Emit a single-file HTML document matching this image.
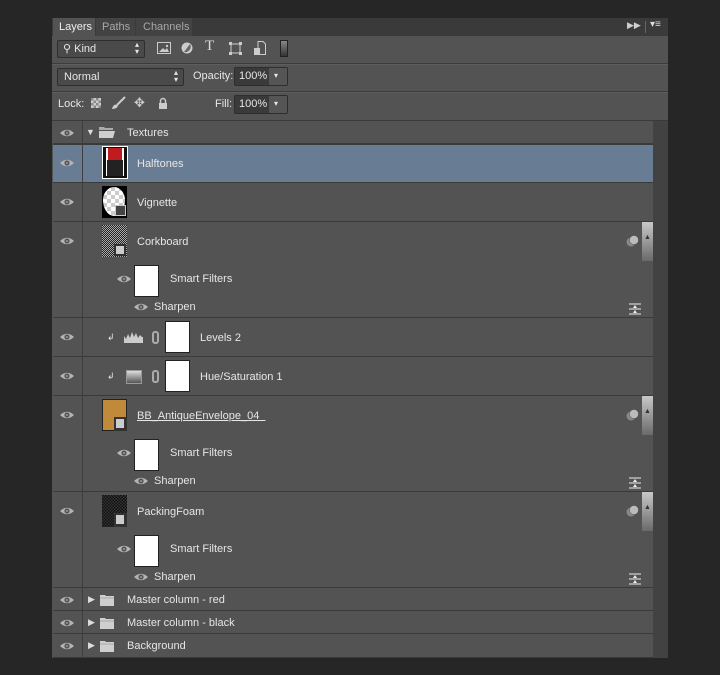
<!DOCTYPE html>
<html><head><meta charset="utf-8"><style>
*{margin:0;padding:0;box-sizing:border-box}
body{width:720px;height:675px;background:#262626;position:relative;overflow:hidden;font-family:"Liberation Sans",sans-serif;font-size:11px;color:#e6e6e6}
.a{position:absolute}
.panel{left:52px;top:18px;width:616px;height:640px;background:#535353}
.row{position:absolute;left:53px;width:600px;border-bottom:1px solid #3a3a3a;background:#535353}
.eyecol{position:absolute;left:82px;width:1px;background:#3e3e3e}
.txt{position:absolute;white-space:nowrap}
.wt{position:absolute;background:#fff;border:1px solid #222}
.box{position:absolute;background:#3d3d3d;border:1px solid #2e2e2e;border-radius:2px}
</style></head><body>
<div class="a panel"></div>
<div class="a" style="left:52px;top:18px;width:616px;height:18px;background:#3a3a3a"></div>
<div class="a" style="left:53px;top:18px;width:42px;height:19px;background:#535353"></div>
<div class="a" style="left:96px;top:18px;width:39px;height:18px;background:#434343"></div>
<div class="a" style="left:136px;top:18px;width:56px;height:18px;background:#434343"></div>
<div class="txt" style="left:59px;top:21px;color:#eee">Layers</div>
<div class="txt" style="left:102px;top:21px;color:#a8a8a8">Paths</div>
<div class="txt" style="left:143px;top:21px;color:#a8a8a8">Channels</div>
<div class="txt" style="left:627px;top:20px;color:#cfcfcf;font-size:9px">▶▶</div>
<div class="a" style="left:645px;top:21px;width:1px;height:12px;background:#666"></div>
<div class="txt" style="left:650px;top:19px;color:#ddd;font-size:10px">▾≡</div>
<div class="a" style="left:52px;top:63px;width:616px;height:1px;background:#3c3c3c"></div>
<div class="a" style="left:52px;top:64px;width:616px;height:1px;background:#5e5e5e"></div>
<div class="a" style="left:52px;top:91px;width:616px;height:1px;background:#3c3c3c"></div>
<div class="a" style="left:52px;top:92px;width:616px;height:1px;background:#5e5e5e"></div>
<div class="a" style="left:52px;top:120px;width:616px;height:1px;background:#3a3a3a"></div>
<div class="box" style="left:57px;top:40px;width:88px;height:18px;background:#4a4a4a"></div>
<div class="txt" style="left:63px;top:42px">⚲ Kind</div>
<div class="txt" style="left:135px;top:41px;font-size:8px;line-height:7px">▴<br>▾</div>
<svg class="a" style="left:157px;top:42px" width="14" height="12"><rect x="0.5" y="0.5" width="13" height="11" fill="none" stroke="#ccc"/><path d="M2 10l4-4 2 2 2-2 2 4z" fill="#ccc"/><circle cx="10" cy="4" r="1.2" fill="#ccc"/></svg>
<svg class="a" style="left:181px;top:42px" width="12" height="12"><circle cx="6" cy="6" r="5.5" fill="#ccc"/><path d="M9 2L3 10A5.5 5.5 0 0 0 9 2z" fill="#666"/></svg>
<div class="txt" style="left:205px;top:38px;font-family:'Liberation Serif',serif;font-size:15px;color:#ddd">T</div>
<svg class="a" style="left:229px;top:42px" width="13" height="13"><rect x="2" y="2" width="9" height="9" fill="none" stroke="#ccc"/><rect x="0" y="0" width="3" height="3" fill="#ccc"/><rect x="10" y="0" width="3" height="3" fill="#ccc"/><rect x="0" y="10" width="3" height="3" fill="#ccc"/><rect x="10" y="10" width="3" height="3" fill="#ccc"/></svg>
<svg class="a" style="left:254px;top:41px" width="12" height="14"><path d="M4 .5h5l2.5 2.5v10.5h-7.5z" fill="none" stroke="#ccc"/><rect x="0" y="7" width="6" height="7" fill="#ccc"/></svg>
<div class="a" style="left:280px;top:40px;width:8px;height:17px;background:linear-gradient(#888,#333);border:1px solid #222"></div>
<div class="box" style="left:57px;top:68px;width:127px;height:18px;background:#4a4a4a"></div>
<div class="txt" style="left:64px;top:71px">Normal</div>
<div class="txt" style="left:174px;top:69px;font-size:8px;line-height:7px">▴<br>▾</div>
<div class="txt" style="left:193px;top:70px">Opacity:</div>
<div class="box" style="left:234px;top:67px;width:54px;height:19px;background:#3a3a3a"></div>
<div class="a" style="left:269px;top:68px;width:18px;height:17px;background:#555"></div>
<div class="txt" style="left:239px;top:70px">100%</div>
<div class="txt" style="left:274px;top:71px;font-size:8px">▾</div>
<div class="txt" style="left:58px;top:98px">Lock:</div>
<div class="a" style="left:91px;top:98px;width:10px;height:10px;background:repeating-conic-gradient(#ccc 0 25%,#888 0 50%) 0 0/5px 5px"></div>
<svg class="a" style="left:111px;top:96px" width="15" height="14"><path d="M14 1L6 9" stroke="#ccc" stroke-width="2"/><path d="M1 13c1-4 3-5 5-4s0 4-5 4z" fill="#ccc"/></svg>
<div class="txt" style="left:134px;top:95px;font-size:13px;color:#ccc">✥</div>
<svg class="a" style="left:158px;top:97px" width="10" height="13"><path d="M2.5 6V4a2.5 2.5 0 0 1 5 0v2" fill="none" stroke="#ccc" stroke-width="1.5"/><rect x="1" y="6" width="8" height="6" fill="#ccc"/></svg>
<div class="txt" style="left:215px;top:98px">Fill:</div>
<div class="box" style="left:234px;top:95px;width:54px;height:19px;background:#3a3a3a"></div>
<div class="a" style="left:269px;top:96px;width:18px;height:17px;background:#555"></div>
<div class="txt" style="left:239px;top:98px">100%</div>
<div class="txt" style="left:274px;top:99px;font-size:8px">▾</div>
<div class="a" style="left:653px;top:121px;width:15px;height:537px;background:#424242"></div>
<div class="row" style="top:121px;height:23px"></div>
<div class="row" style="top:144px;height:39px;background:#687d94;border-top:1px solid #3a3a3a"></div>
<div class="row" style="top:183px;height:39px"></div>
<div class="row" style="top:222px;height:96px"></div>
<div class="row" style="top:318px;height:39px"></div>
<div class="row" style="top:357px;height:39px"></div>
<div class="row" style="top:396px;height:96px"></div>
<div class="row" style="top:492px;height:96px"></div>
<div class="row" style="top:588px;height:23px"></div>
<div class="row" style="top:611px;height:23px"></div>
<div class="row" style="top:634px;height:24px"></div>
<div class="eyecol" style="top:121px;height:537px"></div>
<svg width="0" height="0" style="position:absolute"><defs><g id="eye"><path d="M0 5Q7-1.5 14 5Q7 11.5 0 5z" fill="#b5b5b5"/><circle cx="7" cy="5" r="2.6" fill="#555"/><circle cx="7" cy="5" r="1" fill="#999"/></g></defs></svg>
<svg class="a" style="left:60px;top:128px" width="14" height="10"><use href="#eye"/></svg>
<svg class="a" style="left:60px;top:158px" width="14" height="10"><use href="#eye"/></svg>
<svg class="a" style="left:60px;top:197px" width="14" height="10"><use href="#eye"/></svg>
<svg class="a" style="left:60px;top:236px" width="14" height="10"><use href="#eye"/></svg>
<svg class="a" style="left:117px;top:274px" width="14" height="10"><use href="#eye"/></svg>
<svg class="a" style="left:134px;top:302px" width="14" height="10"><use href="#eye"/></svg>
<svg class="a" style="left:60px;top:332px" width="14" height="10"><use href="#eye"/></svg>
<svg class="a" style="left:60px;top:371px" width="14" height="10"><use href="#eye"/></svg>
<svg class="a" style="left:60px;top:410px" width="14" height="10"><use href="#eye"/></svg>
<svg class="a" style="left:117px;top:448px" width="14" height="10"><use href="#eye"/></svg>
<svg class="a" style="left:134px;top:476px" width="14" height="10"><use href="#eye"/></svg>
<svg class="a" style="left:60px;top:506px" width="14" height="10"><use href="#eye"/></svg>
<svg class="a" style="left:117px;top:544px" width="14" height="10"><use href="#eye"/></svg>
<svg class="a" style="left:134px;top:572px" width="14" height="10"><use href="#eye"/></svg>
<svg class="a" style="left:60px;top:595px" width="14" height="10"><use href="#eye"/></svg>
<svg class="a" style="left:60px;top:618px" width="14" height="10"><use href="#eye"/></svg>
<svg class="a" style="left:60px;top:641px" width="14" height="10"><use href="#eye"/></svg>
<svg width="0" height="0" style="position:absolute"><defs><g id="fold"><path d="M0 2h5l1 1h8v10H0z" fill="#cfcfcf"/><path d="M0 5h14" stroke="#aaa"/></g></defs></svg>
<div class="txt" style="left:86px;top:127px;font-size:9px;color:#ddd">▼</div>
<svg class="a" style="left:99px;top:125px" width="16" height="14"><path d="M0 2h5l1 1h8v2H0z" fill="#aaa"/><path d="M0 6h16l-2 7H0z" fill="#cfcfcf"/></svg>
<div class="txt" style="left:127px;top:127px">Textures</div>
<div class="txt" style="left:88px;top:594px;font-size:9px;color:#ddd">▶</div>
<svg class="a" style="left:100px;top:593px" width="14" height="13"><use href="#fold"/></svg>
<div class="txt" style="left:127px;top:594px">Master column - red</div>
<div class="txt" style="left:88px;top:617px;font-size:9px;color:#ddd">▶</div>
<svg class="a" style="left:100px;top:616px" width="14" height="13"><use href="#fold"/></svg>
<div class="txt" style="left:127px;top:617px">Master column - black</div>
<div class="txt" style="left:88px;top:640px;font-size:9px;color:#ddd">▶</div>
<svg class="a" style="left:100px;top:639px" width="14" height="13"><use href="#fold"/></svg>
<div class="txt" style="left:127px;top:640px">Background</div>
<div class="a" style="left:102px;top:146px;width:26px;height:33px;border:1px solid #fff;background:#111"></div>
<div class="a" style="left:106px;top:148px;width:18px;height:28px;background:#fff"></div>
<div class="a" style="left:108px;top:148px;width:14px;height:12px;background:#c01c20"></div>
<div class="a" style="left:107px;top:160px;width:16px;height:16px;background:#222"></div>
<div class="txt" style="left:137px;top:158px">Halftones</div>
<div class="a" style="left:102px;top:186px;width:25px;height:32px;background:#000"></div>
<div class="a" style="left:103px;top:187px;width:22px;height:29px;border-radius:50% 50% 50% 50%/45% 45% 55% 55%;background:repeating-conic-gradient(#fff 0 25%,#ccc 0 50%) 0 0/8px 8px"></div>
<div class="a" style="left:115px;top:205px;width:11px;height:11px;background:#444;border:1px solid #ccc"></div>
<div class="txt" style="left:137px;top:197px">Vignette</div>
<div class="a" style="left:102px;top:225px;width:25px;height:32px;background:repeating-conic-gradient(#aaa 0 25%,#222 0 50%) 0 0/2px 2px"></div>
<div class="a" style="left:114px;top:244px;width:12px;height:12px;background:#333"></div>
<div class="a" style="left:116px;top:246px;width:8px;height:8px;background:#ccc"></div>
<div class="txt" style="left:137px;top:236px">Corkboard</div>
<div class="wt" style="left:134px;top:265px;width:25px;height:32px"></div>
<div class="txt" style="left:170px;top:273px">Smart Filters</div>
<div class="txt" style="left:154px;top:301px">Sharpen</div>
<div class="txt" style="left:107px;top:332px;font-size:9px">↲</div>
<svg class="a" style="left:124px;top:331px" width="19" height="12"><path d="M0 12V5l2 3 2-5 2 4 2-6 2 5 2-4 2 5 2-3 2 2 1 0v11z" fill="#ccc"/></svg>
<div class="a" style="left:152px;top:331px;width:7px;height:13px;border:2px solid #aaa;border-radius:3px"></div>
<div class="wt" style="left:165px;top:321px;width:25px;height:32px"></div>
<div class="txt" style="left:200px;top:332px">Levels 2</div>
<div class="txt" style="left:107px;top:371px;font-size:9px">↲</div>
<div class="a" style="left:126px;top:370px;width:16px;height:14px;background:linear-gradient(#ddd,#555);border:1px solid #999"></div>
<div class="a" style="left:152px;top:370px;width:7px;height:13px;border:2px solid #aaa;border-radius:3px"></div>
<div class="wt" style="left:165px;top:360px;width:25px;height:32px"></div>
<div class="txt" style="left:200px;top:371px">Hue/Saturation 1</div>
<div class="a" style="left:102px;top:399px;width:25px;height:32px;background:#c08a3a;border:1px solid #222"></div>
<div class="a" style="left:114px;top:417px;width:13px;height:14px;background:#333"></div>
<div class="a" style="left:116px;top:419px;width:8px;height:9px;background:#ccc"></div>
<div class="txt" style="left:137px;top:410px;text-decoration:underline">BB_AntiqueEnvelope_04&nbsp;&nbsp;</div>
<div class="wt" style="left:134px;top:439px;width:25px;height:32px"></div>
<div class="txt" style="left:170px;top:447px">Smart Filters</div>
<div class="txt" style="left:154px;top:475px">Sharpen</div>
<div class="a" style="left:102px;top:495px;width:25px;height:32px;background:repeating-conic-gradient(#333 0 25%,#111 0 50%) 0 0/3px 3px"></div>
<div class="a" style="left:114px;top:513px;width:13px;height:14px;background:#333"></div>
<div class="a" style="left:116px;top:515px;width:8px;height:9px;background:#ccc"></div>
<div class="txt" style="left:137px;top:506px">PackingFoam</div>
<div class="wt" style="left:134px;top:535px;width:25px;height:32px"></div>
<div class="txt" style="left:170px;top:543px">Smart Filters</div>
<div class="txt" style="left:154px;top:571px">Sharpen</div>
<svg width="0" height="0" style="position:absolute"><defs><g id="ov"><circle cx="5" cy="7" r="4.5" fill="#888"/><circle cx="8" cy="5" r="4.5" fill="#bbb" stroke="#555" stroke-width=".5"/></g><g id="fl"><path d="M0 1h12M0 6h12M0 11h12" stroke="#eee"/><path d="M6 2l-2 3h4zM6 7l-2 3h4z" fill="#eee"/></g></defs></svg>
<svg class="a" style="left:626px;top:235px" width="14" height="13"><use href="#ov"/></svg>
<svg class="a" style="left:626px;top:409px" width="14" height="13"><use href="#ov"/></svg>
<svg class="a" style="left:626px;top:505px" width="14" height="13"><use href="#ov"/></svg>
<svg class="a" style="left:629px;top:303px" width="12" height="12"><use href="#fl"/></svg>
<svg class="a" style="left:629px;top:477px" width="12" height="12"><use href="#fl"/></svg>
<svg class="a" style="left:629px;top:573px" width="12" height="12"><use href="#fl"/></svg>
<div class="a" style="left:642px;top:222px;width:11px;height:39px;background:linear-gradient(#c8c8c8,#6a6a6a)"></div>
<div class="txt" style="left:644px;top:234px;font-size:7px;color:#333">▲</div>
<div class="a" style="left:642px;top:396px;width:11px;height:39px;background:linear-gradient(#c8c8c8,#6a6a6a)"></div>
<div class="txt" style="left:644px;top:408px;font-size:7px;color:#333">▲</div>
<div class="a" style="left:642px;top:492px;width:11px;height:39px;background:linear-gradient(#c8c8c8,#6a6a6a)"></div>
<div class="txt" style="left:644px;top:504px;font-size:7px;color:#333">▲</div>
</body></html>
